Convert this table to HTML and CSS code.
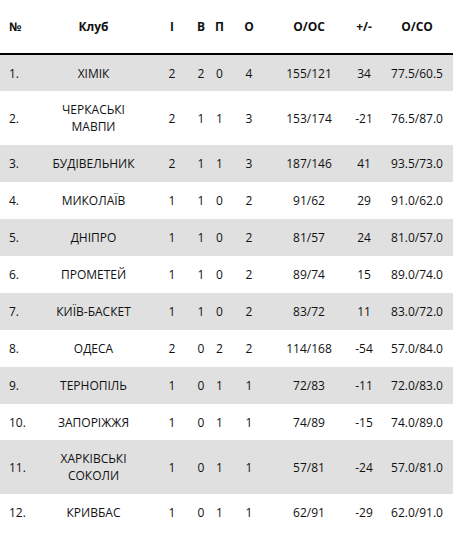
FILE: index.html
```html
<!DOCTYPE html>
<html lang="uk">
<head>
<meta charset="utf-8">
<link rel="stylesheet" href="styles.css">
</head>
<body>
<table class="standings">
  <colgroup>
    <col class="c-num"><col class="c-club"><col class="c-g"><col class="c-w"><col class="c-l"><col class="c-p"><col class="c-pts"><col class="c-diff"><col class="c-avg">
  </colgroup>
  <thead>
    <tr><th class="num">№</th><th>Клуб</th><th>І</th><th>В</th><th>П</th><th>О</th><th>О/ОС</th><th>+/-</th><th>О/СО</th></tr>
  </thead>
  <tbody>
    <tr><td class="num">1.</td><td>ХІМІК</td><td>2</td><td>2</td><td>0</td><td>4</td><td>155/121</td><td>34</td><td>77.5/60.5</td></tr>
    <tr><td class="num">2.</td><td>ЧЕРКАСЬКІ<br>МАВПИ</td><td>2</td><td>1</td><td>1</td><td>3</td><td>153/174</td><td>-21</td><td>76.5/87.0</td></tr>
    <tr><td class="num">3.</td><td>БУДІВЕЛЬНИК</td><td>2</td><td>1</td><td>1</td><td>3</td><td>187/146</td><td>41</td><td>93.5/73.0</td></tr>
    <tr><td class="num">4.</td><td>МИКОЛАЇВ</td><td>1</td><td>1</td><td>0</td><td>2</td><td>91/62</td><td>29</td><td>91.0/62.0</td></tr>
    <tr><td class="num">5.</td><td>ДНІПРО</td><td>1</td><td>1</td><td>0</td><td>2</td><td>81/57</td><td>24</td><td>81.0/57.0</td></tr>
    <tr><td class="num">6.</td><td>ПРОМЕТЕЙ</td><td>1</td><td>1</td><td>0</td><td>2</td><td>89/74</td><td>15</td><td>89.0/74.0</td></tr>
    <tr><td class="num">7.</td><td>КИЇВ-БАСКЕТ</td><td>1</td><td>1</td><td>0</td><td>2</td><td>83/72</td><td>11</td><td>83.0/72.0</td></tr>
    <tr><td class="num">8.</td><td>ОДЕСА</td><td>2</td><td>0</td><td>2</td><td>2</td><td>114/168</td><td>-54</td><td>57.0/84.0</td></tr>
    <tr><td class="num">9.</td><td>ТЕРНОПІЛЬ</td><td>1</td><td>0</td><td>1</td><td>1</td><td>72/83</td><td>-11</td><td>72.0/83.0</td></tr>
    <tr><td class="num">10.</td><td>ЗАПОРІЖЖЯ</td><td>1</td><td>0</td><td>1</td><td>1</td><td>74/89</td><td>-15</td><td>74.0/89.0</td></tr>
    <tr><td class="num">11.</td><td>ХАРКІВСЬКІ<br>СОКОЛИ</td><td>1</td><td>0</td><td>1</td><td>1</td><td>57/81</td><td>-24</td><td>57.0/81.0</td></tr>
    <tr><td class="num">12.</td><td>КРИВБАС</td><td>1</td><td>0</td><td>1</td><td>1</td><td>62/91</td><td>-29</td><td>62.0/91.0</td></tr>
  </tbody>
</table>
</body>
</html>
```

FILE: styles.css
```css
html, body {
  margin: 0;
  padding: 0;
  background: #ffffff;
}

body {
  font-family: "Open Sans", "Liberation Sans", sans-serif;
  font-size: 12px;
  color: #111111;
}

.standings {
  width: 453px;
  table-layout: fixed;
  border-collapse: collapse;
  border-spacing: 0;
}

.c-num { width: 33px; }
.c-club { width: 121px; }
.c-g { width: 36px; }
.c-w { width: 22px; }
.c-l { width: 15px; }
.c-p { width: 44px; }
.c-pts { width: 76px; }
.c-diff { width: 34px; }
.c-avg { width: 72px; }

.standings th,
.standings td {
  padding: 10px 0 9.9px;
  line-height: 17px;
  text-align: center;
  vertical-align: middle;
  white-space: nowrap;
}

.standings th {
  font-weight: 700;
  padding: 18px 0 17.5px;
  border-bottom: 2px solid #000000;
}

.standings .num {
  text-align: left;
  padding-left: 9px;
}

.standings tbody tr:nth-child(odd) {
  background: #e0e0e0;
}
```
